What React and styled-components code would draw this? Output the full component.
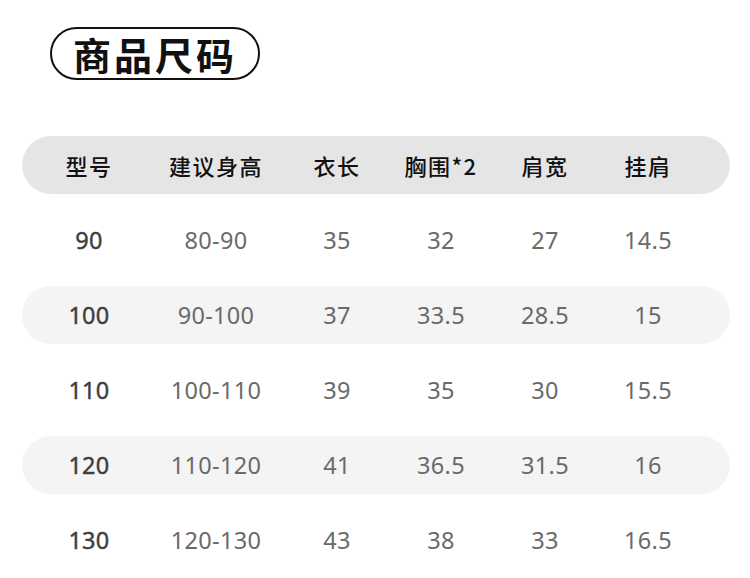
import styled, { createGlobalStyle } from "styled-components";

const GlobalStyle = createGlobalStyle`
  html, body {
    margin: 0;
    padding: 0;
    background: #ffffff;
  }
  body {
    font-family: "Noto Sans", "Noto Sans CJK SC", sans-serif;
  }
`;

const Page = styled.div`
  width: 750px;
  height: 578px;
  padding: 27px 0 0 22px;
  box-sizing: border-box;
  background: #ffffff;
  overflow: hidden;
`;

const TitlePill = styled.div`
  display: inline-flex;
  align-items: center;
  justify-content: center;
  margin-left: 28px;
  width: 210px;
  height: 53px;
  box-sizing: border-box;
  border: 2.5px solid #111;
  border-radius: 27px;
  font-family: "Noto Sans CJK SC", sans-serif;
  font-weight: 700;
  font-size: 38px;
  letter-spacing: 3px;
  color: #111;
`;

const Table = styled.div`
  margin-top: 56px;
  width: 708px;
  display: flex;
  flex-direction: column;
  gap: 17px;
`;

const Row = styled.div`
  display: grid;
  grid-template-columns: 134px 120px 122px 86px 122px 84px 1fr;
  align-items: center;
  height: 58px;
  border-radius: 29px;
  background: ${({ $tone }) =>
    $tone === "head" ? "#e5e5e5" : $tone === "stripe" ? "#f4f4f4" : "transparent"};
`;

const Cell = styled.div`
  text-align: center;
  white-space: nowrap;
  font-family: ${({ $head }) =>
    $head ? '"Noto Sans CJK SC", sans-serif' : '"Noto Sans", sans-serif'};
  font-size: ${({ $head }) => ($head ? "22px" : "23.5px")};
  letter-spacing: ${({ $head }) => ($head ? "1.5px" : "0.3px")};
  font-weight: ${({ $head }) => ($head ? 500 : 400)};
  -webkit-text-stroke: ${({ $first }) => ($first ? "0.4px #3e3e3e" : "0")};
  color: ${({ $head, $first }) => ($head ? "#111" : $first ? "#3e3e3e" : "#6a6a6a")};
`;

const headers = ["型号", "建议身高", "衣长", "胸围*2", "肩宽", "挂肩"];

const sizes = [
  ["90", "80-90", "35", "32", "27", "14.5"],
  ["100", "90-100", "37", "33.5", "28.5", "15"],
  ["110", "100-110", "39", "35", "30", "15.5"],
  ["120", "110-120", "41", "36.5", "31.5", "16"],
  ["130", "120-130", "43", "38", "33", "16.5"],
];

export default function App() {
  return (
    <>
      <GlobalStyle />
      <Page>
        <TitlePill>商品尺码</TitlePill>
        <Table>
          <Row $tone="head">
            {headers.map((h) => (
              <Cell key={h} $head>
                {h}
              </Cell>
            ))}
          </Row>
          {sizes.map((row, i) => (
            <Row key={row[0]} $tone={i % 2 === 1 ? "stripe" : "plain"}>
              {row.map((v, j) => (
                <Cell key={j} $first={j === 0}>
                  {v}
                </Cell>
              ))}
            </Row>
          ))}
        </Table>
      </Page>
    </>
  );
}
